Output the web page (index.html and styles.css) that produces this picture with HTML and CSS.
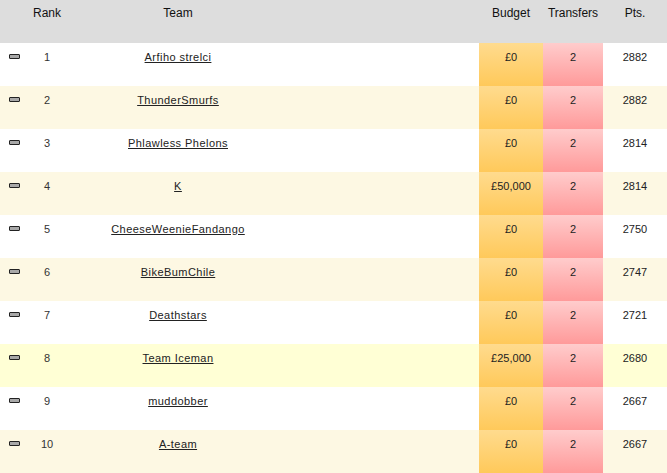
FILE: index.html
```html
<!DOCTYPE html>
<html>
<head>
<meta charset="utf-8">
<link rel="stylesheet" href="styles.css">
</head>
<body>
<table class="league">
  <colgroup>
    <col class="c-move"><col class="c-rank"><col class="c-team"><col class="c-gap"><col class="c-budget"><col class="c-trans"><col class="c-pts">
  </colgroup>
  <thead>
    <tr>
      <th></th><th>Rank</th><th>Team</th><th></th><th>Budget</th><th>Transfers</th><th>Pts.</th>
    </tr>
  </thead>
  <tbody>
    <tr><td><span class="same"></span></td><td class="rank">1</td><td><a href="#">Arfiho strelci</a></td><td></td><td class="budget">£0</td><td class="trans">2</td><td>2882</td></tr>
    <tr class="alt"><td><span class="same"></span></td><td class="rank">2</td><td><a href="#">ThunderSmurfs</a></td><td></td><td class="budget">£0</td><td class="trans">2</td><td>2882</td></tr>
    <tr><td><span class="same"></span></td><td class="rank">3</td><td><a href="#">Phlawless Phelons</a></td><td></td><td class="budget">£0</td><td class="trans">2</td><td>2814</td></tr>
    <tr class="alt"><td><span class="same"></span></td><td class="rank">4</td><td><a href="#">K</a></td><td></td><td class="budget">£50,000</td><td class="trans">2</td><td>2814</td></tr>
    <tr><td><span class="same"></span></td><td class="rank">5</td><td><a href="#">CheeseWeenieFandango</a></td><td></td><td class="budget">£0</td><td class="trans">2</td><td>2750</td></tr>
    <tr class="alt"><td><span class="same"></span></td><td class="rank">6</td><td><a href="#">BikeBumChile</a></td><td></td><td class="budget">£0</td><td class="trans">2</td><td>2747</td></tr>
    <tr><td><span class="same"></span></td><td class="rank">7</td><td><a href="#">Deathstars</a></td><td></td><td class="budget">£0</td><td class="trans">2</td><td>2721</td></tr>
    <tr class="mine"><td><span class="same"></span></td><td class="rank">8</td><td><a href="#">Team Iceman</a></td><td></td><td class="budget">£25,000</td><td class="trans">2</td><td>2680</td></tr>
    <tr><td><span class="same"></span></td><td class="rank">9</td><td><a href="#">muddobber</a></td><td></td><td class="budget">£0</td><td class="trans">2</td><td>2667</td></tr>
    <tr class="alt"><td><span class="same"></span></td><td class="rank">10</td><td><a href="#">A-team</a></td><td></td><td class="budget">£0</td><td class="trans">2</td><td>2667</td></tr>
  </tbody>
</table>
</body>
</html>
```
FILE: styles.css
```css
html, body {
  margin: 0;
  padding: 0;
  background: #ffffff;
}
body {
  font-family: "Liberation Sans", Arial, sans-serif;
  color: #222;
}
.league {
  width: 667px;
  border-collapse: collapse;
  table-layout: fixed;
}
.c-move { width: 28px; }
.c-rank { width: 38px; }
.c-team { width: 224px; }
.c-gap { width: 189px; }
.c-budget { width: 64px; }
.c-trans { width: 60px; }
.c-pts { width: 64px; }

.league th {
  background: #dddddd;
  height: 43px;
  padding: 6px 0 0;
  box-sizing: border-box;
  vertical-align: top;
  font-size: 12px;
  font-weight: normal;
  color: #111;
  line-height: 14px;
  text-align: center;
}
.league td {
  height: 43px;
  padding: 8px 0 0;
  box-sizing: border-box;
  vertical-align: top;
  font-size: 11px;
  line-height: 13px;
  text-align: center;
  color: #222;
}
.league tr.alt td { background: #fdf8e3; }
.league tr.mine td { background: #ffffd5; }
.league td.rank { color: #333; }
.league a {
  color: #222;
  text-decoration: underline;
  letter-spacing: 0.45px;
}
.league td.budget,
.league tr td.budget {
  background: linear-gradient(#ffdb8e, #ffc95a);
}
.league td.trans,
.league tr td.trans {
  background: linear-gradient(#ffcccc, #ff9a9a);
}
.same {
  display: inline-block;
  width: 9px;
  height: 3px;
  margin-top: 3px;
  border: 1px solid #222;
  border-radius: 1px;
  background: #a8a8a8;
  vertical-align: top;
}
```
